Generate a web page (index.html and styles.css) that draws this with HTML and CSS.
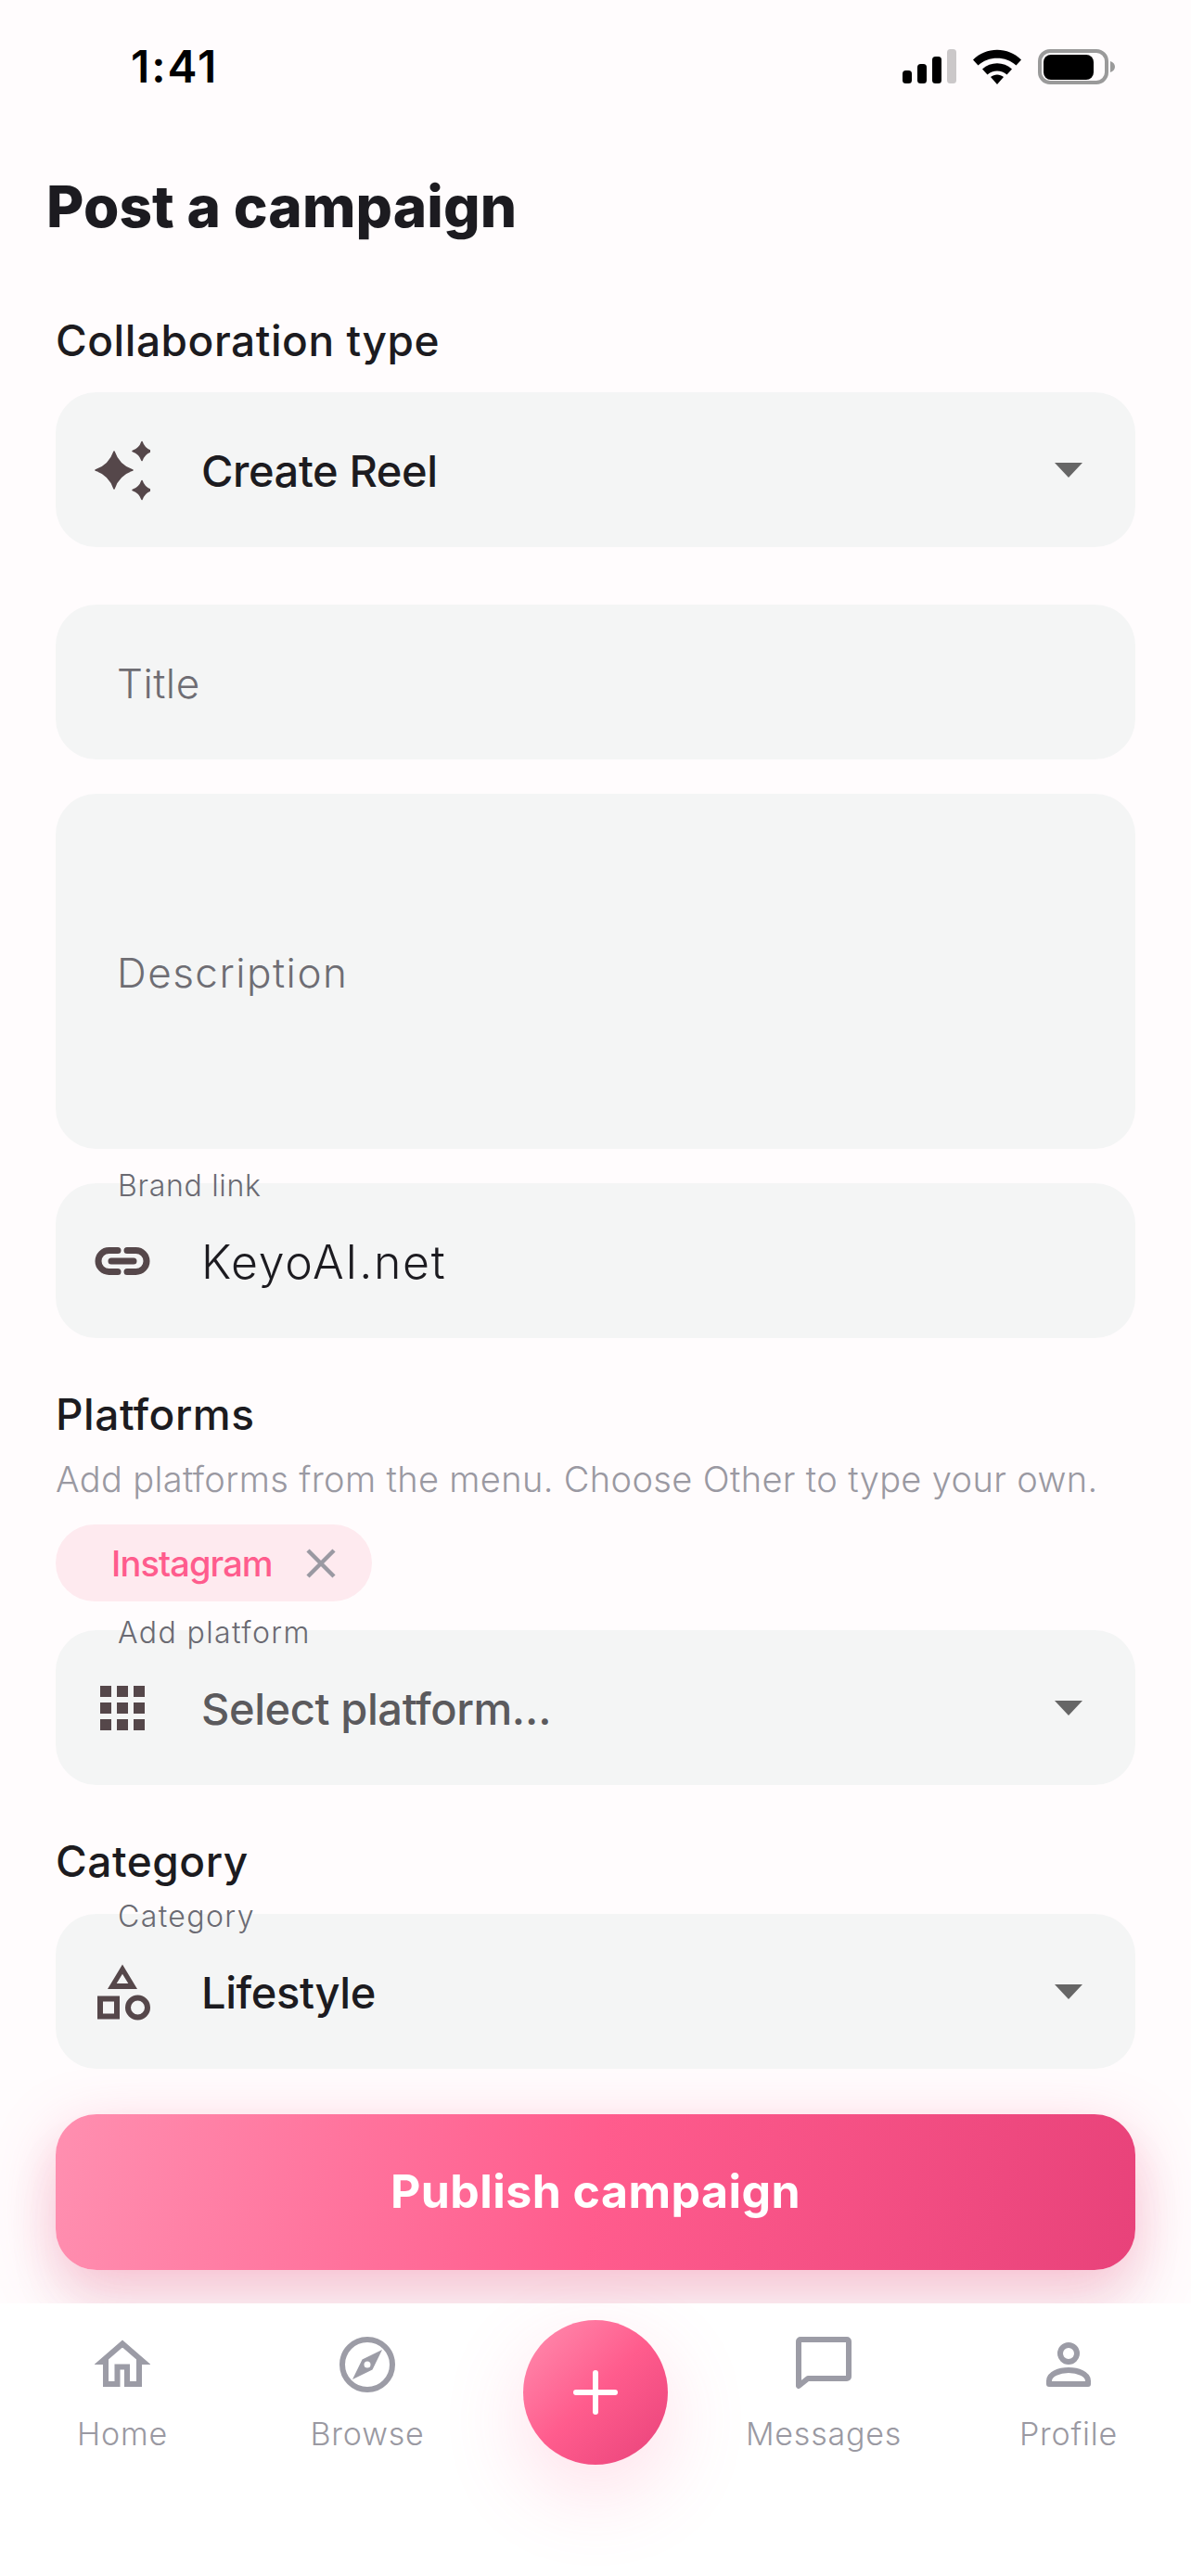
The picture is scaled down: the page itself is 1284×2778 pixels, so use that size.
FILE: index.html
```html
<!DOCTYPE html>
<html lang="en">
<head>
<meta charset="utf-8">
<title>Post a campaign</title>
<link rel="stylesheet" href="styles.css">
</head>
<body>
<div class="screen">
  <header class="status">
    <span class="time">1:41</span>
    <div class="status-icons">
      <svg class="ic-signal" width="58" height="37" viewBox="0 0 58 37"><rect x="0" y="23" width="10" height="14" rx="3.5"/><rect x="16" y="16" width="10" height="21" rx="3.5"/><rect x="32" y="8" width="10" height="29" rx="3.5"/><rect class="dim" x="48" y="0" width="10" height="37" rx="3.5"/></svg>
      <svg class="ic-wifi" width="52" height="38" viewBox="0 0 52 38"><path d="M0 11.500C14-3 38-3 52 11.500l-5.500 6C35.500 7 16.500 7 5.500 17.500Z"/><path d="M10 21.500C19 13 33 13 42 21.500l-5.500 6C30.500 22 21.500 22 15.500 27.500Z"/><path d="M19 30C23 26.500 29 26.500 33 30L26 38Z"/></svg>
      <svg class="ic-battery" width="83" height="38" viewBox="0 0 83 38"><rect class="bat-frame" x="2" y="2" width="72" height="34" rx="11"/><rect x="6" y="6" width="54" height="27" rx="8"/><path class="bat-nub" d="M78 13c3 1 5 3 5 6s-2 5-5 6Z"/></svg>
    </div>
  </header>

  <main class="content">
    <h1 class="page-title">Post a campaign</h1>

    <h2 class="section-label label-first">Collaboration type</h2>
    <div class="field">
      <svg class="field-icon icon-sparkle" width="60" height="72" viewBox="0 0 60 72"><path d="M21 16Q26 31 41 36 26 41 21 56 16 41 1 36 16 31 21 16Z"/><path d="M51 5.500Q53.500 13 61 15.500 53.500 18 51 25.500 48.500 18 41 15.500 48.500 13 51 5.500Z"/><path d="M51 47.500Q53.500 55 61 57.500 53.500 60 51 67.500 48.500 60 41 57.500 48.500 55 51 47.500Z"/></svg>
      <span class="field-value medium">Create Reel</span>
      <span class="caret"></span>
    </div>

    <div class="field field-spaced"><span class="placeholder placeholder-short">Title</span></div>
    <div class="field field-tall"><span class="placeholder">Description</span></div>

    <div class="field field-labelled">
      <span class="float-label label-tight">Brand link</span>
      <svg class="field-icon" width="60" height="40" viewBox="0 0 60 40"><path class="stroke" d="M25 8.500H15.500a11.500 11.500 0 0 0 0 23H25M35 8.500h9.500a11.500 11.500 0 0 1 0 23H35M18 20h24"/></svg>
      <span class="field-value light wide">KeyoAI.net</span>
    </div>

    <h2 class="section-label label-platforms">Platforms</h2>
    <p class="helper">Add platforms from the menu. Choose Other to type your own.</p>
    <div class="chip">
      <span class="chip-text">Instagram</span>
      <svg width="32" height="32" viewBox="0 0 32 32"><path class="chip-x" d="M2 2l28 28M30 2L2 30"/></svg>
    </div>

    <div class="field field-labelled field-platform">
      <span class="float-label label-loose">Add platform</span>
      <svg class="field-icon" width="60" height="48" viewBox="0 0 60 48"><g class="grid-dots"><rect x="6" width="12" height="12"/><rect x="24" width="12" height="12"/><rect x="42" width="12" height="12"/><rect x="6" y="18" width="12" height="12"/><rect x="24" y="18" width="12" height="12"/><rect x="42" y="18" width="12" height="12"/><rect x="6" y="36" width="12" height="12"/><rect x="24" y="36" width="12" height="12"/><rect x="42" y="36" width="12" height="12"/></g></svg>
      <span class="field-value medium muted">Select platform…</span>
      <span class="caret"></span>
    </div>

    <h2 class="section-label label-category">Category</h2>
    <div class="field field-labelled field-category">
      <span class="float-label label-loose">Category</span>
      <svg class="field-icon" width="60" height="62" viewBox="0 0 60 62"><path class="shape-fill" fill-rule="evenodd" d="M30 1.500 46 28H14ZM30 11.800 23.700 22H36.300Z"/><rect class="stroke-miter" x="6" y="38.500" width="18" height="19"/><circle class="stroke-miter" cx="46.500" cy="48" r="10.500"/></svg>
      <span class="field-value medium">Lifestyle</span>
      <span class="caret"></span>
    </div>

    <button class="publish">Publish campaign</button>
  </main>

  <nav class="tabbar">
    <div class="tab">
      <svg width="60" height="60" viewBox="0 0 60 60"><path class="tab-stroke" d="M12 51V27H7.500L30 7.500 52.500 27H48V51H35V32.500H24.500V51Z"/></svg>
      <span>Home</span>
    </div>
    <div class="tab">
      <svg width="60" height="60" viewBox="0 0 60 60"><circle class="tab-stroke" cx="30" cy="30" r="27"/><path fill-rule="evenodd" class="tab-fill" d="M46 14 35.500 35.500 14 46 24.500 24.500ZM30 26.500a3.500 3.500 0 1 0 0 7 3.500 3.500 0 0 0 0-7Z"/></svg>
      <span>Browse</span>
    </div>
    <div class="tab-center">
      <button class="fab" aria-label="Add">
        <svg width="52" height="52" viewBox="0 0 52 52"><path class="fab-plus" d="M26 5v42M5 26h42"/></svg>
      </button>
    </div>
    <div class="tab">
      <svg width="60" height="60" viewBox="0 0 60 60"><path class="tab-stroke round" d="M3 5a2 2 0 0 1 2-2h50a2 2 0 0 1 2 2v38a2 2 0 0 1-2 2H13L3 53Z"/></svg>
      <span>Messages</span>
    </div>
    <div class="tab">
      <svg width="60" height="60" viewBox="0 0 60 60"><circle class="tab-stroke" cx="30" cy="18" r="9"/><path class="tab-stroke round" d="M9 51V47.500C9 40 20 36 30 36S51 40 51 47.500V51Z"/></svg>
      <span>Profile</span>
    </div>
  </nav>
</div>
</body>
</html>
```

FILE: styles.css
```css
* { box-sizing: border-box; margin: 0; padding: 0; }
html, body { width: 1284px; height: 2778px; overflow: hidden; }
body { font-family: "Inter", "Noto Sans", sans-serif; background: #fffcfd; color: #1c1b20; }

.screen { width: 1284px; height: 2778px; display: flex; flex-direction: column; }

.status { height: 150px; flex: none; display: flex; justify-content: space-between; padding: 53px 82px 0 141px; }
.time { font-size: 48px; font-weight: 600; line-height: 38px; color: #000; letter-spacing: 2px; }
.status-icons { display: flex; gap: 18px; align-items: flex-start; height: 38px; }
.dim { fill: #cbc8c9; }
.ic-battery .bat-frame { fill: none; stroke: #9a9a9a; stroke-width: 4; }
.bat-nub { fill: #9a9a9a; }

.content { flex: 1; min-height: 0; padding: 0 60px; overflow: hidden; }
.page-title { font-size: 62px; font-weight: 800; line-height: 76px; margin: 35px 0 0 -10px; letter-spacing: .1px; }
.section-label { font-size: 46px; font-weight: 500; line-height: 56px; letter-spacing: .55px; }
.label-first { margin-top: 78px; margin-bottom: 28px; }
.label-platforms { margin-top: 54px; }
.label-category { margin-top: 54px; margin-bottom: 29px; }

.field { position: relative; height: 167px; background: #f4f5f5; border-radius: 44px; display: flex; align-items: center; padding: 3px 57px 0 42px; }
.field-spaced { margin-top: 62px; padding-left: 66px; }
.field-tall { margin-top: 37px; height: 383px; padding-left: 66px; }
.field-labelled { margin-top: 37px; }
.field-platform { margin-top: 31px; }
.field-category { margin-top: 0; }
.field-icon { flex: none; margin-right: 55px; margin-top: -3px; fill: #55474a; }
.field-value { font-size: 47px; line-height: 60px; flex: 1; }
.medium { font-weight: 500; letter-spacing: -.4px; }
.light { font-weight: 300; }
.wide { font-size: 50px; letter-spacing: 1.700px; }
.muted { color: #5b5a5d; }
.placeholder { font-size: 44px; font-weight: 300; color: #6e6d73; letter-spacing: 1.500px; }
.placeholder-short { letter-spacing: .5px; }
.caret { flex: none; width: 0; height: 0; margin-top: -3px; border-left: 15px solid transparent; border-right: 15px solid transparent; border-top: 16px solid #666; }
.float-label { position: absolute; left: 67px; top: -17px; font-size: 32px; font-weight: 300; line-height: 40px; color: #6a6a72; letter-spacing: 1px; }
.label-tight { letter-spacing: .7px; }
.label-loose { letter-spacing: 1.400px; }

.stroke { fill: none; stroke: #55474a; stroke-width: 7; stroke-linecap: round; }
.stroke-miter { fill: none; stroke: #55474a; stroke-width: 6; }
.shape-fill { fill: #55474a; }
.icon-sparkle path { stroke: #55474a; stroke-width: 1.500; stroke-linejoin: round; }
.grid-dots rect { fill: #55474a; }

.helper { margin-top: 17px; font-size: 38px; font-weight: 300; line-height: 50px; color: #9a99a2; letter-spacing: .36px; white-space: nowrap; }
.chip { margin-top: 24px; width: 341px; height: 83px; border-radius: 42px; background: #feeaef; display: flex; align-items: center; padding-left: 60px; gap: 36px; }
.chip-text { font-size: 38px; font-weight: 500; color: #ff5c8d; letter-spacing: -.9px; }
.chip-x { fill: none; stroke: #9a99a2; stroke-width: 4.500; }

.publish { display: block; width: 100%; height: 168px; margin-top: 49px; padding-bottom: 2px; border: 0; border-radius: 44px; font-family: inherit; font-size: 50px; font-weight: 700; letter-spacing: .45px; color: #fff; background: linear-gradient(100deg, #ff8fb0 0%, #ff5c8d 50%, #e8427a 100%); box-shadow: 0 18px 64px rgba(255, 92, 141, .34), 0 40px 60px rgba(110, 50, 70, .07); }

.tabbar { flex: none; height: 294px; background: #fff; display: grid; grid-template-columns: 264px 264px 1fr 264px 264px; position: relative; }
.tab { display: flex; flex-direction: column; align-items: center; padding-top: 36px; font-size: 34px; font-weight: 300; color: #9a99a2; letter-spacing: .8px; }
.tab span { margin-top: 24px; line-height: 42px; }
.tab-stroke { fill: none; stroke: #9c9ca6; stroke-width: 6; }
.tab-stroke.round { stroke-linejoin: round; }
.tab-fill { fill: #9c9ca6; }
.tab-center { display: flex; justify-content: center; padding-top: 18px; }
.fab { width: 156px; height: 156px; border: 0; border-radius: 50%; display: flex; align-items: center; justify-content: center; background: linear-gradient(135deg, #ff8fb0 0%, #ff5c8d 50%, #e8427a 100%); box-shadow: 0 30px 90px rgba(255, 92, 141, .2); }
.fab-plus { fill: none; stroke: #fff; stroke-width: 6; stroke-linecap: round; }
```
